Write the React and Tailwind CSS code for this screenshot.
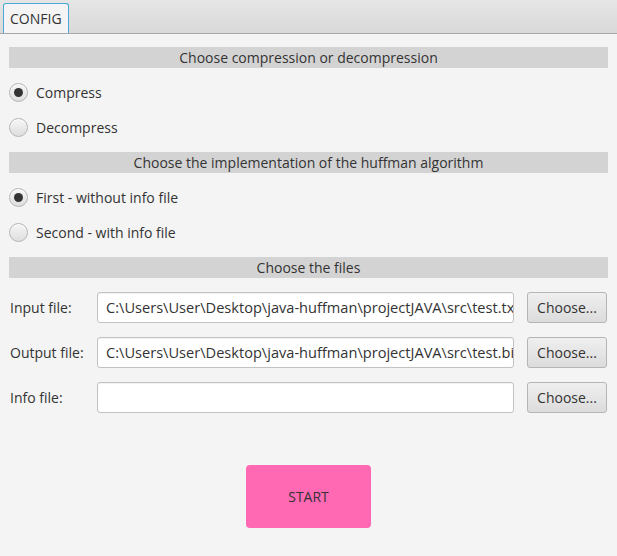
import React from 'react';

const font = { fontFamily: '"Open Sans", "Noto Sans", sans-serif' };

function Header({ children }) {
  return (
    <div className="h-[21px] bg-[#d3d3d3] flex items-center justify-center text-[14px] text-[#333]">
      {children}
    </div>
  );
}

function Radio({ label, checked }) {
  return (
    <div className="h-[35px] flex items-center gap-[8px]">
      <div className="w-[19px] h-[19px] rounded-full border border-[#b5b5b5] bg-gradient-to-b from-[#f6f6f6] to-[#dedede] flex items-center justify-center shadow-[inset_0_1px_0_#fff]">
        {checked && <div className="w-[9px] h-[9px] rounded-full bg-[#333]" />}
      </div>
      <span className="text-[14px] text-[#333]">{label}</span>
    </div>
  );
}

function FileRow({ label, value }) {
  return (
    <div className="flex items-center h-[31px]">
      <span className="w-[87px] text-[14px] text-[#333]">{label}</span>
      <div className="w-[417px] h-[31px] bg-white border border-[#c2c2c2] rounded-[3px] flex items-center px-[8px] overflow-hidden whitespace-nowrap text-[14.6px] text-[#333] shadow-[inset_0_1px_1px_rgba(0,0,0,0.06)]">
        {value}
      </div>
      <button className="ml-[13px] w-[80px] h-[31px] rounded-[3px] border border-[#b5b5b5] bg-gradient-to-b from-[#efefef] to-[#dcdcdc] text-[14px] text-[#333]">
        Choose...
      </button>
    </div>
  );
}

export default function App() {
  return (
    <div className="w-[617px] h-[556px] bg-[#f4f4f4] flex flex-col" style={font}>
      <div className="h-[34px] bg-gradient-to-b from-[#e6e6e6] to-[#d9d9d9] border-b border-[#a8a8a8] flex items-end pl-[3px]">
        <div className="h-[30px] px-[6px] border border-b-0 border-[#4aa8d8] rounded-t-[3px] bg-[#f4f4f4] flex items-center text-[14px] text-[#333]">
          CONFIG
        </div>
      </div>
      <div className="px-[9px] pt-[13px] flex flex-col">
        <Header>Choose compression or decompression</Header>
        <div className="mt-[7px]">
          <Radio label="Compress" checked />
          <Radio label="Decompress" />
        </div>
        <div className="mt-[7px]">
          <Header>Choose the implementation of the huffman algorithm</Header>
        </div>
        <div className="mt-[7px]">
          <Radio label="First - without info file" checked />
          <Radio label="Second - with info file" />
        </div>
        <div className="mt-[7px]">
          <Header>Choose the files</Header>
        </div>
        <div className="mt-[14px] flex flex-col gap-[14px] pl-[1px]">
          <FileRow label="Input file:" value="C:\Users\User\Desktop\java-huffman\projectJAVA\src\test.txt" />
          <FileRow label="Output file:" value="C:\Users\User\Desktop\java-huffman\projectJAVA\src\test.bin" />
          <FileRow label="Info file:" value="" />
        </div>
        <div className="mt-[52px] flex justify-center">
          <button className="w-[125px] h-[63px] rounded-[4px] bg-[#ff69b4] text-[14px] text-[#333]">
            START
          </button>
        </div>
      </div>
    </div>
  );
}
